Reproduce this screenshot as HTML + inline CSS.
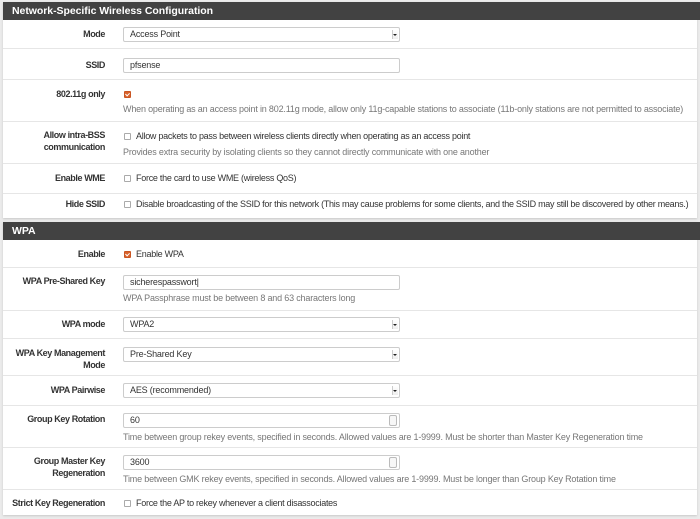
<!DOCTYPE html>
<html><head><style>
body{margin:0;width:700px;height:519px;background:#ebebeb;font-family:"Liberation Sans",sans-serif;font-size:9px;color:#333;position:relative;overflow:hidden;letter-spacing:-0.18px}
.p{position:absolute;left:3px;width:694px;background:#fff;box-shadow:0 1px 2px rgba(0,0,0,.15)}
.h{position:absolute;left:3px;width:697px;height:18px;background:#424242;color:#fff;font-weight:bold;font-size:10.5px;line-height:18px;padding-left:9px;box-sizing:border-box;letter-spacing:-0.05px}
.sep{position:absolute;left:3px;width:694px;height:1px;background:#e6e6e6}
.l{position:absolute;right:595px;text-align:right;font-weight:bold;line-height:12px;white-space:nowrap;letter-spacing:-0.4px}
.t{position:absolute;left:136px;line-height:12px;white-space:nowrap;color:#333;letter-spacing:-0.27px}
.d{position:absolute;left:123px;line-height:12px;white-space:nowrap;color:#777}
.i{position:absolute;left:123px;width:277px;height:15px;border:1px solid #ccc;border-radius:2px;box-sizing:border-box;padding-left:6px;line-height:13px;background:#fff}
.s::after{content:"";position:absolute;right:1px;top:2px;width:5px;height:9px;border-left:1px solid #ccc;background:linear-gradient(#fff,#eee)}
.s::before{content:"";position:absolute;right:2px;top:6px;border:2px solid transparent;border-top:2px solid #222;z-index:2}
.n::after{content:"";position:absolute;right:2px;top:1px;width:8px;height:11px;border:1px solid #bbb;border-radius:2px;box-sizing:border-box;background:#f7f7f7}
.c{position:absolute;left:124px;width:7px;height:7px;border:1px solid #aaa;border-radius:1px;box-sizing:border-box;background:#fff}
.cc{background:#d9622a;border-color:#c95522}
.cc::after{content:"";position:absolute;left:1px;top:0;width:2px;height:3px;border:solid #fff;border-width:0 1px 1px 0;transform:rotate(45deg)}
</style></head><body>
<div class="p" style="top:2px;height:216px"></div>
<div class="h" style="top:2px">Network-Specific Wireless Configuration</div>
<div class="sep" style="top:48px"></div><div class="sep" style="top:79px"></div><div class="sep" style="top:121px"></div><div class="sep" style="top:163px"></div><div class="sep" style="top:193px"></div>

<div class="l" style="top:28px">Mode</div>
<div class="i s" style="top:27px">Access Point</div>
<div class="l" style="top:59px">SSID</div>
<div class="i" style="top:58px">pfsense</div>
<div class="l" style="top:88px">802.11g only</div>
<div class="c cc" style="top:91px"></div>
<div class="d" style="top:103px">When operating as an access point in 802.11g mode, allow only 11g-capable stations to associate (11b-only stations are not permitted to associate)</div>
<div class="l" style="top:129px">Allow intra-BSS<br>communication</div>
<div class="c" style="top:133px"></div>
<div class="t" style="top:130px">Allow packets to pass between wireless clients directly when operating as an access point</div>
<div class="d" style="top:146px">Provides extra security by isolating clients so they cannot directly communicate with one another</div>
<div class="l" style="top:172px">Enable WME</div>
<div class="c" style="top:175px"></div>
<div class="t" style="top:172px">Force the card to use WME (wireless QoS)</div>
<div class="l" style="top:198px">Hide SSID</div>
<div class="c" style="top:201px"></div>
<div class="t" style="top:198px">Disable broadcasting of the SSID for this network (This may cause problems for some clients, and the SSID may still be discovered by other means.)</div>

<div class="p" style="top:222px;height:293px"></div>
<div class="h" style="top:222px">WPA</div>
<div class="sep" style="top:267px"></div><div class="sep" style="top:310px"></div><div class="sep" style="top:338px"></div><div class="sep" style="top:375px"></div><div class="sep" style="top:405px"></div><div class="sep" style="top:447px"></div><div class="sep" style="top:489px"></div>

<div class="l" style="top:248px">Enable</div>
<div class="c cc" style="top:251px"></div>
<div class="t" style="top:248px">Enable WPA</div>
<div class="l" style="top:275px">WPA Pre-Shared Key</div>
<div class="i" style="top:275px">sicherespasswort|</div>
<div class="d" style="top:292px">WPA Passphrase must be between 8 and 63 characters long</div>
<div class="l" style="top:318px">WPA mode</div>
<div class="i s" style="top:317px">WPA2</div>
<div class="l" style="top:347px">WPA Key Management<br>Mode</div>
<div class="i s" style="top:347px">Pre-Shared Key</div>
<div class="l" style="top:384px">WPA Pairwise</div>
<div class="i s" style="top:383px">AES (recommended)</div>
<div class="l" style="top:413px">Group Key Rotation</div>
<div class="i n" style="top:413px">60</div>
<div class="d" style="top:431px">Time between group rekey events, specified in seconds. Allowed values are 1-9999. Must be shorter than Master Key Regeneration time</div>
<div class="l" style="top:455px">Group Master Key<br>Regeneration</div>
<div class="i n" style="top:455px">3600</div>
<div class="d" style="top:473px">Time between GMK rekey events, specified in seconds. Allowed values are 1-9999. Must be longer than Group Key Rotation time</div>
<div class="l" style="top:497px">Strict Key Regeneration</div>
<div class="c" style="top:500px"></div>
<div class="t" style="top:497px">Force the AP to rekey whenever a client disassociates</div>
</body></html>
